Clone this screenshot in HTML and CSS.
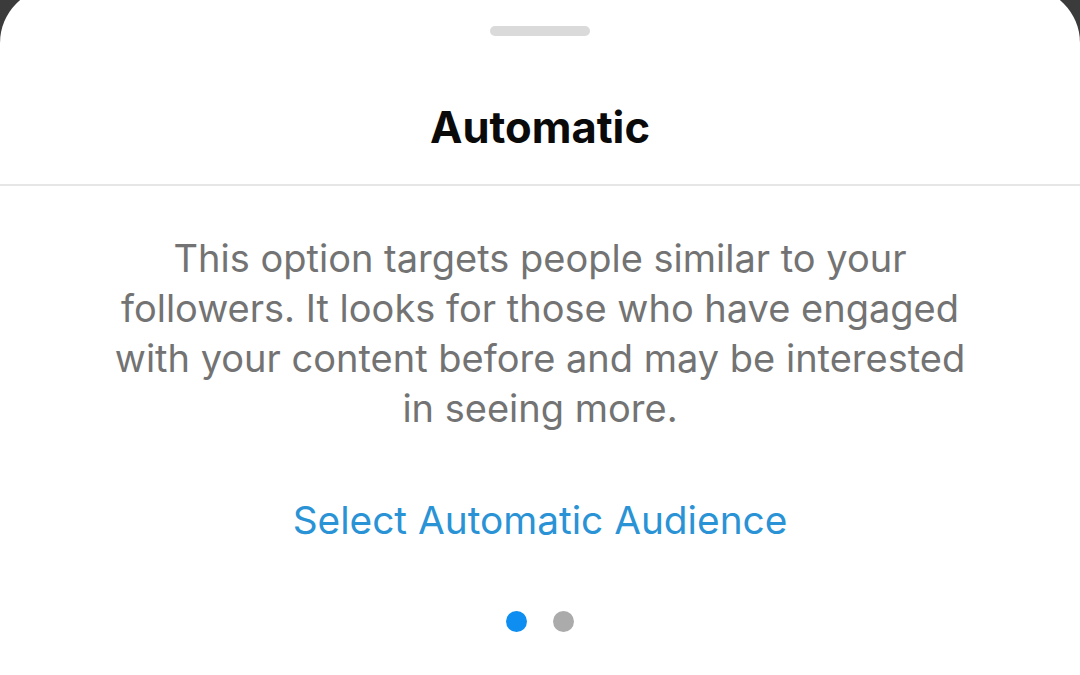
FILE: index.html
```html
<!DOCTYPE html>
<html>

<head>
	<meta name="viewport" content="width=device-width, initial-scale=1" />
	<title>Automatic</title>
	<link rel="stylesheet" href="styles.css">
</head>

<body>
	<div class="sheet">
		<div class="handle"></div>
		<h3 class="title">Automatic</h3>
		<div class="content">
			<p class="desc">This option targets people similar to your followers. It looks for those who have engaged with your content before and may be interested in seeing more.</p>
			<a class="action" href="#">Select Automatic Audience</a>
			<div class="dots">
				<span class="dot on"></span>
				<span class="dot"></span>
			</div>
		</div>
	</div>
</body>

</html>
```

FILE: styles.css
```css
body {
	margin:0;
	background-color:#3b3b3b;
	font-family:Inter, "Liberation Sans", sans-serif;
	overflow:hidden;
}

.sheet {
	margin-top:-13px;
	height:688px;
	background-color:#fff;
	border-radius:56px 56px 0 0;
	text-align:center;
	padding-top:39px;
	box-sizing:border-box;
}

.handle {
	width:100px;
	height:10px;
	margin:0 auto;
	border-radius:5px;
	background-color:#dadada;
}

.title {
	margin:66px 0 0;
	padding-bottom:32px;
	font-size:43.5px;
	line-height:50px;
	font-weight:700;
	color:#0a0a0a;
	border-bottom:2px solid #e6e6e6;
}

.content {
	display:flex;
	flex-direction:column;
	align-items:center;
}

.desc {
	margin:47px 0 0;
	width:860px;
	font-size:38px;
	line-height:50px;
	color:#737373;
}

.action {
	margin-top:62px;
	font-size:38.8px;
	line-height:50px;
	color:#2a93d6;
	text-decoration:none;
}

.dots {
	display:flex;
	gap:26px;
	margin-top:66px;
}

.dot {
	width:21px;
	height:21px;
	border-radius:50%;
	background-color:#ababab;
}

.dot.on {
	background-color:#0d8ef0;
}
```
